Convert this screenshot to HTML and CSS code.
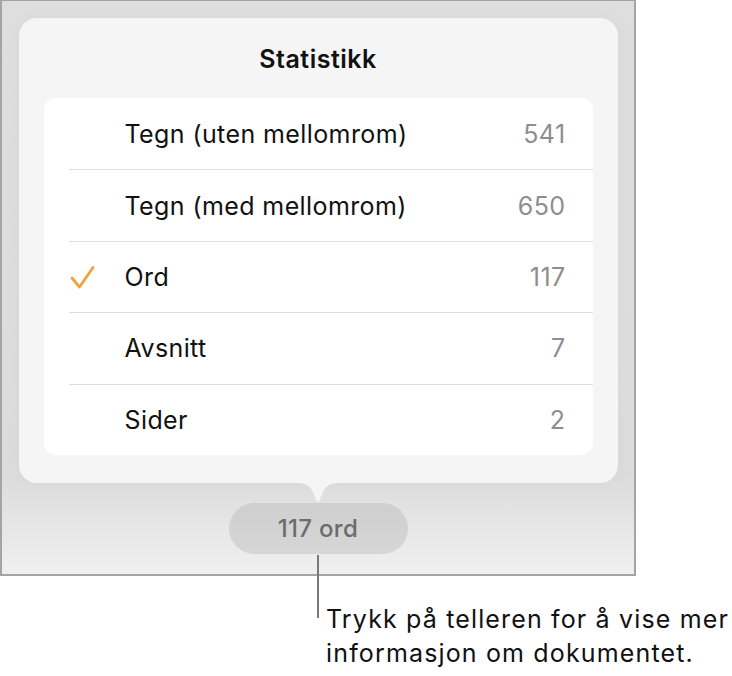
FILE: index.html
```html
<!DOCTYPE html>
<html lang="no">
<head>
<meta charset="utf-8">
<title>Statistikk</title>
<link rel="stylesheet" href="styles.css">
</head>
<body>
<div class="page">
  <div class="frame">
    <div class="popover">
      <h1 class="title">Statistikk</h1>
      <ul class="card">
        <li class="row"><div class="row-inner"><span class="check"></span><span class="label">Tegn (uten mellomrom)</span><span class="value">541</span></div></li>
        <li class="row"><div class="row-inner sep"><span class="check"></span><span class="label">Tegn (med mellomrom)</span><span class="value">650</span></div></li>
        <li class="row"><div class="row-inner sep"><span class="check"><svg width="28" height="26" viewBox="0 0 28 26"><path d="M3 13 L10.5 22 L24 2.5" fill="none" stroke="#f2a23a" stroke-width="2.8" stroke-linecap="round" stroke-linejoin="round"/></svg></span><span class="label">Ord</span><span class="value">117</span></div></li>
        <li class="row"><div class="row-inner sep"><span class="check"></span><span class="label">Avsnitt</span><span class="value">7</span></div></li>
        <li class="row"><div class="row-inner sep"><span class="check"></span><span class="label">Sider</span><span class="value">2</span></div></li>
      </ul>
      <svg class="arrow" width="42" height="21" viewBox="0 0 42 21"><path d="M0 0 C9 0 13 3 16 9 L19.5 17.5 Q21 20.5 22.5 17.5 L26 9 C29 3 33 0 42 0 Z" fill="#f5f5f5"/></svg>
    </div>
    <div class="counter">117 ord</div>
  </div>
  <p class="callout">Trykk på telleren for å vise mer<br>informasjon om dokumentet.</p>
</div>
</body>
</html>
```
FILE: styles.css
```css
* { box-sizing: border-box; }
html, body { margin: 0; padding: 0; background: #ffffff; }
body { font-family: Inter, "Noto Sans", sans-serif; color: #111; }
.page { width: 732px; height: 676px; }
.frame {
  width: 636px;
  height: 576px;
  border: 2px solid #a4a4a4;
  border-top-width: 1px;
  background: linear-gradient(to bottom, #dedede 0%, #dcdcdc 83%, #f0f0f0 100%);
  display: flex;
  flex-direction: column;
  align-items: center;
  padding-top: 17px;
}
.popover {
  position: relative;
  width: 599px;
  height: 465px;
  background: #f5f5f5;
  border-radius: 18px;
  padding: 0 25px;
  box-shadow: 0 0 18px rgba(0,0,0,0.03);
}
.title {
  margin: 0;
  padding-top: 25px;
  height: 80px;
  font-size: 25px;
  line-height: 32px;
  font-weight: 600;
  letter-spacing: 0.5px;
  text-align: center;
  color: #111;
}
.card {
  list-style: none;
  margin: 0;
  padding: 0;
  background: #ffffff;
  border-radius: 12px;
  height: 357px;
}
.row { padding-left: 25px; height: 71.4px; }
.row-inner {
  height: 100%;
  display: flex;
  align-items: center;
  padding-right: 27px;
}
.row-inner.sep { border-top: 1px solid #dedede; }
.check { width: 56px; flex: none; display: flex; align-items: center; }
.check svg { display: block; margin-top: 2px; }
.label { flex: 1; font-size: 25px; letter-spacing: 0.4px; color: #111; }
.value { font-size: 25px; letter-spacing: 0.4px; color: #8e8e8e; }
.arrow { position: absolute; left: 50%; top: 100%; margin-left: -21px; display: block; }
.counter {
  position: relative;
  margin-top: 20px;
  width: 179px;
  height: 51px;
  border-radius: 26px;
  background: linear-gradient(to bottom, #cfcfcf, #d6d6d6);
  display: flex;
  align-items: center;
  justify-content: center;
  font-size: 24px;
  font-weight: 500;
  letter-spacing: 0.3px;
  color: #6c6c6c;
}
.counter::after {
  content: "";
  position: absolute;
  top: 100%;
  left: 50%;
  margin-left: -1px;
  margin-top: 1px;
  width: 2px;
  height: 63px;
  background: #7a7a7a;
}
.callout {
  margin: 26px 0 0 326px;
  font-size: 25px;
  line-height: 34px;
  letter-spacing: 1.15px;
  color: #111;
  white-space: nowrap;
}
```
